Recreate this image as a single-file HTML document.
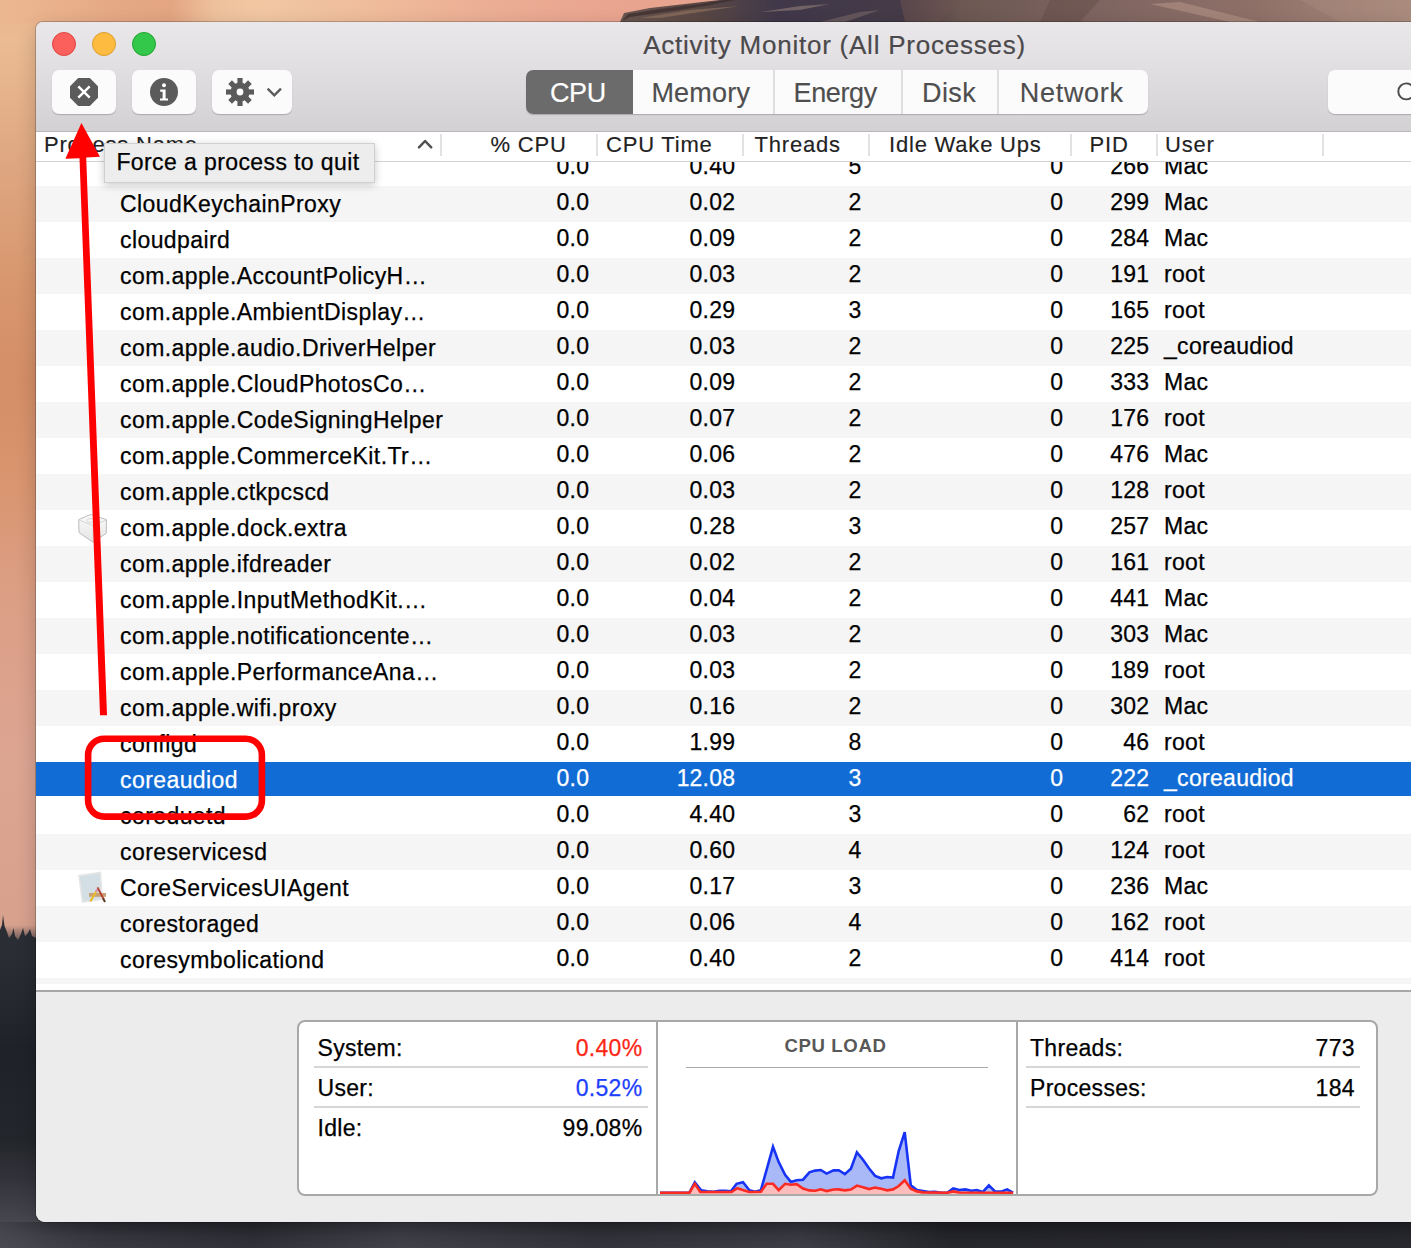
<!DOCTYPE html>
<html><head><meta charset="utf-8"><style>
*{box-sizing:border-box;margin:0;padding:0}
html,body{width:1411px;height:1248px;overflow:hidden}
body{position:relative;font-family:"Liberation Sans",sans-serif;background:#2c2c31}
.a{position:absolute}
.t{white-space:nowrap}
.row{position:absolute;left:0;width:1375px;height:36px;white-space:nowrap;color:#000}
.row.g{background:#f5f5f5}
.row.sel{background:linear-gradient(180deg,#116cd6 0px,#116cd6 34px,#fff 34px);color:#fff}
.row span{position:absolute;top:0;line-height:36px;font-size:23px;letter-spacing:0.3px;-webkit-text-stroke:0.25px currentColor}
.row span.r{text-align:right;width:300px;letter-spacing:0.2px}
.row span.n{letter-spacing:0.42px}
.bl{position:absolute;font-size:23px;line-height:30px;letter-spacing:0.3px;white-space:nowrap;color:#000;-webkit-text-stroke:0.25px currentColor}
.bl.r{text-align:right;width:300px}
</style></head><body>
<div class="a" style="left:0;top:0;width:1411px;height:1248px;background:linear-gradient(180deg,#eab48e 0px,#ebbb93 40px,#dfa983 150px,#d8976f 280px,#d48e68 380px,#d9956f 480px,#dc9f86 600px,#dca592 760px,#d8a18e 925px,#6a5a58 940px,#2a2d33 955px,#1f2228 1050px,#23262b 1140px,#33343b 1180px,#44454c 1215px,#55565d 1248px)"></div>
<div class="a" style="left:0;top:0;width:1411px;height:23px;background:linear-gradient(90deg,#ebb790 0px,#eab48e 36px,#e6a985 110px,#e3a582 170px,#eec19c 215px,#f1c7a2 260px,#efbd9b 360px,#ecb096 470px,#eaa791 560px,#e9a48f 640px,#e9a48f 1411px)"></div>
<svg class="a" style="left:0;top:0" width="1411" height="24" viewBox="0 0 1411 24">
<defs><linearGradient id="rk" gradientUnits="userSpaceOnUse" x1="620" x2="1411" y1="0" y2="0">
<stop offset="0" stop-color="#6a5650"/><stop offset="0.1" stop-color="#5a4844"/><stop offset="0.2" stop-color="#40384a"/><stop offset="0.36" stop-color="#453b48"/>
<stop offset="0.43" stop-color="#6c5852"/><stop offset="0.6" stop-color="#7e6460"/><stop offset="0.8" stop-color="#8e7068"/><stop offset="1" stop-color="#a88a7c"/></linearGradient></defs>
<path d="M620 22 L624 13 L650 8 L685 4 L720 0 L1411 0 L1411 24 L620 24Z" fill="url(#rk)"/>
<path d="M622 21 L628 14 L660 9 L700 4 L725 0 L735 0 L705 6 L665 12 L630 17Z" fill="#3a2c2c" opacity="0.7"/>
<path d="M640 18 L690 10 L740 6 L700 12 L660 18Z" fill="#9a7a66" opacity="0.55"/>
<path d="M760 12 L800 6 L830 4 L800 10Z" fill="#a08a80" opacity="0.5"/>
<path d="M820 22 L860 12 L880 10 L845 22Z" fill="#8c7870" opacity="0.45"/>
<path d="M900 0 L960 0 L940 22 L905 22Z" fill="#6e5450" opacity="0.5"/>
<path d="M1150 4 L1230 22 L1260 22 L1180 2Z" fill="#c2a090" opacity="0.45"/>
<path d="M1050 0 L1100 0 L1080 22 L1040 22Z" fill="#5e4844" opacity="0.4"/>
<path d="M1300 0 L1411 0 L1411 22 L1340 22Z" fill="#b09080" opacity="0.35"/>
</svg>
<div class="a" style="left:0;top:1222px;width:1411px;height:26px;background:linear-gradient(180deg,#25262c 0px,#35363d 14px,#3a3b42 26px)"></div>
<svg class="a" style="left:0;top:900px" width="36" height="60" viewBox="0 900 36 60">
<path d="M0 960 L0 930 L2 925 L3 915 L4.5 926 L7 932 L9 938 L12 934 L13.5 928 L15 936 L18 940 L21 934 L23 928 L25 936 L28 933 L30 929 L32 936 L36 938 L36 960Z" fill="#2a2d33"/>
</svg>
<div class="a" style="left:0;top:1222px;width:1411px;height:26px;background:linear-gradient(90deg,rgba(90,90,98,0.5) 0px,rgba(60,60,68,0.2) 100px,rgba(30,30,36,0.3) 250px,rgba(80,80,88,0.35) 400px,rgba(40,40,46,0.3) 600px,rgba(70,70,78,0.3) 800px,rgba(20,20,24,0.5) 950px,rgba(25,25,30,0.5) 1411px)"></div>
<div class="a" style="left:36px;top:22px;width:1375px;height:1200px;border-radius:7px 0 0 9px;background:#ececec;box-shadow:0 0 0 1px rgba(0,0,0,0.2),0 6px 20px rgba(0,0,0,0.2)"></div>
<div class="a" style="left:36px;top:22px;width:1375px;height:110px;border-radius:7px 0 0 0;background:linear-gradient(180deg,#e9e7e9 0px,#e5e3e5 25px,#d3d1d3 108px);border-bottom:1px solid #b8b6b8"></div>
<div class="a" style="left:52px;top:32px;width:24px;height:24px;border-radius:50%;background:#fc605c;border:1px solid #de4640"></div>
<div class="a" style="left:92px;top:32px;width:24px;height:24px;border-radius:50%;background:#fdbc40;border:1px solid #dc9c2c"></div>
<div class="a" style="left:132px;top:32px;width:24px;height:24px;border-radius:50%;background:#34c84a;border:1px solid #22a230"></div>
<div class="a" style="left:434px;top:15px;width:800px;text-align:center;font-size:26px;line-height:60px;color:#4b494b;letter-spacing:0.76px;white-space:nowrap;padding-left:1px;-webkit-text-stroke:0.2px #4b494b">Activity Monitor (All Processes)</div>
<div class="a" style="left:52px;top:70px;width:64px;height:44px;background:#fbfbfb;border-radius:7px;box-shadow:0 1px 1px rgba(0,0,0,0.2)"></div>
<div class="a" style="left:132px;top:70px;width:64px;height:44px;background:#fbfbfb;border-radius:7px;box-shadow:0 1px 1px rgba(0,0,0,0.2)"></div>
<div class="a" style="left:212px;top:70px;width:80px;height:44px;background:#fbfbfb;border-radius:7px;box-shadow:0 1px 1px rgba(0,0,0,0.2)"></div>
<svg class="a" style="left:0;top:0" width="400" height="130" viewBox="0 0 400 130">
<polygon points="78.2,78 89.8,78 98,86.2 98,97.8 89.8,106 78.2,106 70,97.8 70,86.2" fill="#5b5b5b"/>
<path d="M78.3 86.3 L89.7 97.7 M89.7 86.3 L78.3 97.7" stroke="#fff" stroke-width="2.4"/>
<circle cx="164" cy="92" r="14" fill="#5b5b5b"/>
<circle cx="164" cy="85.3" r="2" fill="#fff"/>
<path d="M160.2 89.6 L165.6 89.6 L165.6 98.4 L168 98.4 L168 100.6 L160 100.6 L160 98.4 L162.6 98.4 L162.6 91.8 L160.2 91.8Z" fill="#fff"/>
<g transform="translate(240,92)" fill="#5b5b5b">
<circle r="9.6"/>
<rect x="-2.6" y="-14" width="5.2" height="28"/>
<rect x="-14" y="-2.6" width="28" height="5.2"/>
<rect x="-2.6" y="-14" width="5.2" height="28" transform="rotate(45)"/>
<rect x="-14" y="-2.6" width="28" height="5.2" transform="rotate(45)"/>
<circle r="3.4" fill="#fff"/>
</g>
<path d="M267.6 88.6 L274.3 95.3 L281 88.6" stroke="#5b5b5b" stroke-width="2.4" fill="none"/>
</svg>
<div class="a" style="left:526px;top:70px;width:622px;height:44px;background:#fbfbfb;border-radius:7px;box-shadow:0 1px 1px rgba(0,0,0,0.2);overflow:hidden"><div class="a" style="left:0;top:0;width:107px;height:44px;background:#6b6b6b"></div></div>
<div class="a" style="left:773px;top:70px;width:2px;height:44px;background:#dedede"></div>
<div class="a" style="left:901px;top:70px;width:2px;height:44px;background:#dedede"></div>
<div class="a" style="left:997px;top:70px;width:2px;height:44px;background:#dedede"></div>
<div class="a" style="left:549.9px;top:63px;font-size:27px;line-height:60px;color:#fff;letter-spacing:-0.3px;white-space:nowrap;-webkit-text-stroke:0.15px #fff">CPU</div>
<div class="a" style="left:651.4px;top:63px;font-size:27px;line-height:60px;color:#4e4e4e;letter-spacing:0.2px;white-space:nowrap;-webkit-text-stroke:0.15px #4e4e4e">Memory</div>
<div class="a" style="left:793.6px;top:63px;font-size:27px;line-height:60px;color:#4e4e4e;letter-spacing:-0.4px;white-space:nowrap;-webkit-text-stroke:0.15px #4e4e4e">Energy</div>
<div class="a" style="left:922px;top:63px;font-size:27px;line-height:60px;color:#4e4e4e;letter-spacing:0.4px;white-space:nowrap;-webkit-text-stroke:0.15px #4e4e4e">Disk</div>
<div class="a" style="left:1019.8px;top:63px;font-size:27px;line-height:60px;color:#4e4e4e;letter-spacing:0.7px;white-space:nowrap;-webkit-text-stroke:0.15px #4e4e4e">Network</div>
<div class="a" style="left:1328px;top:70px;width:120px;height:44px;background:#fbfbfb;border-radius:7px;box-shadow:0 1px 1px rgba(0,0,0,0.2)"></div>
<svg class="a" style="left:1380px;top:70px" width="31" height="44"><circle cx="26.3" cy="21.4" r="8" stroke="#4a4a4a" stroke-width="1.9" fill="none"/></svg>
<div class="a" style="left:36px;top:132px;width:1375px;height:30px;background:#fff;border-bottom:1px solid #d3d3d3"></div>
<div class="a" style="left:44px;top:129.6px;font-size:22px;line-height:30px;color:#222;letter-spacing:0.8px;white-space:nowrap;-webkit-text-stroke:0.15px #222">Process Name</div>
<div class="a" style="left:266.7px;width:300px;text-align:right;top:129.6px;font-size:22px;line-height:30px;color:#222;letter-spacing:0.8px;white-space:nowrap;-webkit-text-stroke:0.15px #222">% CPU</div>
<div class="a" style="left:606px;top:129.6px;font-size:22px;line-height:30px;color:#222;letter-spacing:0.8px;white-space:nowrap;-webkit-text-stroke:0.15px #222">CPU Time</div>
<div class="a" style="left:754.6px;top:129.6px;font-size:22px;line-height:30px;color:#222;letter-spacing:0.8px;white-space:nowrap;-webkit-text-stroke:0.15px #222">Threads</div>
<div class="a" style="left:889px;top:129.6px;font-size:22px;line-height:30px;color:#222;letter-spacing:0.8px;white-space:nowrap;-webkit-text-stroke:0.15px #222">Idle Wake Ups</div>
<div class="a" style="left:1089.6px;top:129.6px;font-size:22px;line-height:30px;color:#222;letter-spacing:0.8px;white-space:nowrap;-webkit-text-stroke:0.15px #222">PID</div>
<div class="a" style="left:1165px;top:129.6px;font-size:22px;line-height:30px;color:#222;letter-spacing:0.8px;white-space:nowrap;-webkit-text-stroke:0.15px #222">User</div>
<div class="a" style="left:440px;top:134px;width:2px;height:22px;background:#e2e2e2"></div>
<div class="a" style="left:596px;top:134px;width:2px;height:22px;background:#e2e2e2"></div>
<div class="a" style="left:742px;top:134px;width:2px;height:22px;background:#e2e2e2"></div>
<div class="a" style="left:868px;top:134px;width:2px;height:22px;background:#e2e2e2"></div>
<div class="a" style="left:1070px;top:134px;width:2px;height:22px;background:#e2e2e2"></div>
<div class="a" style="left:1156px;top:134px;width:2px;height:22px;background:#e2e2e2"></div>
<div class="a" style="left:1322px;top:134px;width:2px;height:22px;background:#e2e2e2"></div>
<svg class="a" style="left:410px;top:135px" width="30" height="20"><path d="M9 12.3 L15.1 6 L21.2 12.3" stroke="#505050" stroke-width="2.5" stroke-linecap="round" stroke-linejoin="round" fill="none"/></svg>
<div class="a" style="left:36px;top:162px;width:1375px;height:828px;overflow:hidden;background:#fff"><div class="row" style="top:-12px"><span class="r" style="left:253.19999999999996px;top:-2px">0.0</span><span class="r" style="left:399.2px;top:-2px">0.40</span><span class="r" style="left:525.4000000000001px;top:-2px">5</span><span class="r" style="left:727.2000000000002px;top:-2px">0</span><span class="r" style="left:813.2000000000002px;top:-2px">266</span><span style="left:1128px;top:-2px">Mac</span></div><div class="row g" style="top:24px"><span class="n" style="left:84px;top:0px">CloudKeychainProxy</span><span class="r" style="left:253.19999999999996px;top:-2px">0.0</span><span class="r" style="left:399.2px;top:-2px">0.02</span><span class="r" style="left:525.4000000000001px;top:-2px">2</span><span class="r" style="left:727.2000000000002px;top:-2px">0</span><span class="r" style="left:813.2000000000002px;top:-2px">299</span><span style="left:1128px;top:-2px">Mac</span></div><div class="row" style="top:60px"><span class="n" style="left:84px;top:0px">cloudpaird</span><span class="r" style="left:253.19999999999996px;top:-2px">0.0</span><span class="r" style="left:399.2px;top:-2px">0.09</span><span class="r" style="left:525.4000000000001px;top:-2px">2</span><span class="r" style="left:727.2000000000002px;top:-2px">0</span><span class="r" style="left:813.2000000000002px;top:-2px">284</span><span style="left:1128px;top:-2px">Mac</span></div><div class="row g" style="top:96px"><span class="n" style="left:84px;top:0px">com.apple.AccountPolicyH…</span><span class="r" style="left:253.19999999999996px;top:-2px">0.0</span><span class="r" style="left:399.2px;top:-2px">0.03</span><span class="r" style="left:525.4000000000001px;top:-2px">2</span><span class="r" style="left:727.2000000000002px;top:-2px">0</span><span class="r" style="left:813.2000000000002px;top:-2px">191</span><span style="left:1128px;top:-2px">root</span></div><div class="row" style="top:132px"><span class="n" style="left:84px;top:0px">com.apple.AmbientDisplay…</span><span class="r" style="left:253.19999999999996px;top:-2px">0.0</span><span class="r" style="left:399.2px;top:-2px">0.29</span><span class="r" style="left:525.4000000000001px;top:-2px">3</span><span class="r" style="left:727.2000000000002px;top:-2px">0</span><span class="r" style="left:813.2000000000002px;top:-2px">165</span><span style="left:1128px;top:-2px">root</span></div><div class="row g" style="top:168px"><span class="n" style="left:84px;top:0px">com.apple.audio.DriverHelper</span><span class="r" style="left:253.19999999999996px;top:-2px">0.0</span><span class="r" style="left:399.2px;top:-2px">0.03</span><span class="r" style="left:525.4000000000001px;top:-2px">2</span><span class="r" style="left:727.2000000000002px;top:-2px">0</span><span class="r" style="left:813.2000000000002px;top:-2px">225</span><span style="left:1128px;top:-2px">_coreaudiod</span></div><div class="row" style="top:204px"><span class="n" style="left:84px;top:0px">com.apple.CloudPhotosCo…</span><span class="r" style="left:253.19999999999996px;top:-2px">0.0</span><span class="r" style="left:399.2px;top:-2px">0.09</span><span class="r" style="left:525.4000000000001px;top:-2px">2</span><span class="r" style="left:727.2000000000002px;top:-2px">0</span><span class="r" style="left:813.2000000000002px;top:-2px">333</span><span style="left:1128px;top:-2px">Mac</span></div><div class="row g" style="top:240px"><span class="n" style="left:84px;top:0px">com.apple.CodeSigningHelper</span><span class="r" style="left:253.19999999999996px;top:-2px">0.0</span><span class="r" style="left:399.2px;top:-2px">0.07</span><span class="r" style="left:525.4000000000001px;top:-2px">2</span><span class="r" style="left:727.2000000000002px;top:-2px">0</span><span class="r" style="left:813.2000000000002px;top:-2px">176</span><span style="left:1128px;top:-2px">root</span></div><div class="row" style="top:276px"><span class="n" style="left:84px;top:0px">com.apple.CommerceKit.Tr…</span><span class="r" style="left:253.19999999999996px;top:-2px">0.0</span><span class="r" style="left:399.2px;top:-2px">0.06</span><span class="r" style="left:525.4000000000001px;top:-2px">2</span><span class="r" style="left:727.2000000000002px;top:-2px">0</span><span class="r" style="left:813.2000000000002px;top:-2px">476</span><span style="left:1128px;top:-2px">Mac</span></div><div class="row g" style="top:312px"><span class="n" style="left:84px;top:0px">com.apple.ctkpcscd</span><span class="r" style="left:253.19999999999996px;top:-2px">0.0</span><span class="r" style="left:399.2px;top:-2px">0.03</span><span class="r" style="left:525.4000000000001px;top:-2px">2</span><span class="r" style="left:727.2000000000002px;top:-2px">0</span><span class="r" style="left:813.2000000000002px;top:-2px">128</span><span style="left:1128px;top:-2px">root</span></div><div class="row" style="top:348px"><span class="n" style="left:84px;top:0px">com.apple.dock.extra</span><span class="r" style="left:253.19999999999996px;top:-2px">0.0</span><span class="r" style="left:399.2px;top:-2px">0.28</span><span class="r" style="left:525.4000000000001px;top:-2px">3</span><span class="r" style="left:727.2000000000002px;top:-2px">0</span><span class="r" style="left:813.2000000000002px;top:-2px">257</span><span style="left:1128px;top:-2px">Mac</span></div><div class="row g" style="top:384px"><span class="n" style="left:84px;top:0px">com.apple.ifdreader</span><span class="r" style="left:253.19999999999996px;top:-2px">0.0</span><span class="r" style="left:399.2px;top:-2px">0.02</span><span class="r" style="left:525.4000000000001px;top:-2px">2</span><span class="r" style="left:727.2000000000002px;top:-2px">0</span><span class="r" style="left:813.2000000000002px;top:-2px">161</span><span style="left:1128px;top:-2px">root</span></div><div class="row" style="top:420px"><span class="n" style="left:84px;top:0px">com.apple.InputMethodKit.…</span><span class="r" style="left:253.19999999999996px;top:-2px">0.0</span><span class="r" style="left:399.2px;top:-2px">0.04</span><span class="r" style="left:525.4000000000001px;top:-2px">2</span><span class="r" style="left:727.2000000000002px;top:-2px">0</span><span class="r" style="left:813.2000000000002px;top:-2px">441</span><span style="left:1128px;top:-2px">Mac</span></div><div class="row g" style="top:456px"><span class="n" style="left:84px;top:0px">com.apple.notificationcente…</span><span class="r" style="left:253.19999999999996px;top:-2px">0.0</span><span class="r" style="left:399.2px;top:-2px">0.03</span><span class="r" style="left:525.4000000000001px;top:-2px">2</span><span class="r" style="left:727.2000000000002px;top:-2px">0</span><span class="r" style="left:813.2000000000002px;top:-2px">303</span><span style="left:1128px;top:-2px">Mac</span></div><div class="row" style="top:492px"><span class="n" style="left:84px;top:0px">com.apple.PerformanceAna…</span><span class="r" style="left:253.19999999999996px;top:-2px">0.0</span><span class="r" style="left:399.2px;top:-2px">0.03</span><span class="r" style="left:525.4000000000001px;top:-2px">2</span><span class="r" style="left:727.2000000000002px;top:-2px">0</span><span class="r" style="left:813.2000000000002px;top:-2px">189</span><span style="left:1128px;top:-2px">root</span></div><div class="row g" style="top:528px"><span class="n" style="left:84px;top:0px">com.apple.wifi.proxy</span><span class="r" style="left:253.19999999999996px;top:-2px">0.0</span><span class="r" style="left:399.2px;top:-2px">0.16</span><span class="r" style="left:525.4000000000001px;top:-2px">2</span><span class="r" style="left:727.2000000000002px;top:-2px">0</span><span class="r" style="left:813.2000000000002px;top:-2px">302</span><span style="left:1128px;top:-2px">Mac</span></div><div class="row" style="top:564px"><span class="n" style="left:84px;top:0px">configd</span><span class="r" style="left:253.19999999999996px;top:-2px">0.0</span><span class="r" style="left:399.2px;top:-2px">1.99</span><span class="r" style="left:525.4000000000001px;top:-2px">8</span><span class="r" style="left:727.2000000000002px;top:-2px">0</span><span class="r" style="left:813.2000000000002px;top:-2px">46</span><span style="left:1128px;top:-2px">root</span></div><div class="row g sel" style="top:600px"><span class="n" style="left:84px;top:0px">coreaudiod</span><span class="r" style="left:253.19999999999996px;top:-2px">0.0</span><span class="r" style="left:399.2px;top:-2px">12.08</span><span class="r" style="left:525.4000000000001px;top:-2px">3</span><span class="r" style="left:727.2000000000002px;top:-2px">0</span><span class="r" style="left:813.2000000000002px;top:-2px">222</span><span style="left:1128px;top:-2px">_coreaudiod</span></div><div class="row" style="top:636px"><span class="n" style="left:84px;top:0px">coreduetd</span><span class="r" style="left:253.19999999999996px;top:-2px">0.0</span><span class="r" style="left:399.2px;top:-2px">4.40</span><span class="r" style="left:525.4000000000001px;top:-2px">3</span><span class="r" style="left:727.2000000000002px;top:-2px">0</span><span class="r" style="left:813.2000000000002px;top:-2px">62</span><span style="left:1128px;top:-2px">root</span></div><div class="row g" style="top:672px"><span class="n" style="left:84px;top:0px">coreservicesd</span><span class="r" style="left:253.19999999999996px;top:-2px">0.0</span><span class="r" style="left:399.2px;top:-2px">0.60</span><span class="r" style="left:525.4000000000001px;top:-2px">4</span><span class="r" style="left:727.2000000000002px;top:-2px">0</span><span class="r" style="left:813.2000000000002px;top:-2px">124</span><span style="left:1128px;top:-2px">root</span></div><div class="row" style="top:708px"><span class="n" style="left:84px;top:0px">CoreServicesUIAgent</span><span class="r" style="left:253.19999999999996px;top:-2px">0.0</span><span class="r" style="left:399.2px;top:-2px">0.17</span><span class="r" style="left:525.4000000000001px;top:-2px">3</span><span class="r" style="left:727.2000000000002px;top:-2px">0</span><span class="r" style="left:813.2000000000002px;top:-2px">236</span><span style="left:1128px;top:-2px">Mac</span></div><div class="row g" style="top:744px"><span class="n" style="left:84px;top:0px">corestoraged</span><span class="r" style="left:253.19999999999996px;top:-2px">0.0</span><span class="r" style="left:399.2px;top:-2px">0.06</span><span class="r" style="left:525.4000000000001px;top:-2px">4</span><span class="r" style="left:727.2000000000002px;top:-2px">0</span><span class="r" style="left:813.2000000000002px;top:-2px">162</span><span style="left:1128px;top:-2px">root</span></div><div class="row" style="top:780px"><span class="n" style="left:84px;top:0px">coresymbolicationd</span><span class="r" style="left:253.19999999999996px;top:-2px">0.0</span><span class="r" style="left:399.2px;top:-2px">0.40</span><span class="r" style="left:525.4000000000001px;top:-2px">2</span><span class="r" style="left:727.2000000000002px;top:-2px">0</span><span class="r" style="left:813.2000000000002px;top:-2px">414</span><span style="left:1128px;top:-2px">root</span></div><div class="row g" style="top:816px;height:6px"></div></div>
<svg class="a" style="left:70px;top:505px" width="45" height="45" viewBox="70 505 45 45">
<defs><linearGradient id="pg" x1="0" x2="0" y1="0" y2="1"><stop offset="0" stop-color="#fbfbfb"/><stop offset="1" stop-color="#e4e4e4"/></linearGradient></defs>
<path d="M78.7 519.6 L90.6 514.5 L106.5 519.6 L106.2 533.4 L92.9 542.2 L79 532.6 Z" fill="url(#pg)" stroke="#bcbcbc" stroke-width="1"/>
<path d="M79 520 L92.9 525.5 L106.3 520" fill="none" stroke="#d0d0d0" stroke-width="0.9"/>
<path d="M92.9 525.5 L92.9 542" stroke="#d6d6d6" stroke-width="0.9"/>
<ellipse cx="91" cy="520.5" rx="4.2" ry="2" fill="#f4f4f4" stroke="#d2d2d2" stroke-width="0.8"/>
</svg>
<svg class="a" style="left:70px;top:865px" width="45" height="45" viewBox="70 865 45 45">
<polygon points="79,875.6 100.4,872.5 102.2,899.2 82.4,902" fill="#d3dee5" stroke="#e6e6e6" stroke-width="1.6"/>
<rect x="89" y="893" width="17" height="3.8" fill="#c8a276"/>
<path d="M90.3 901.5 L96.3 891.2" stroke="#e8bd2c" stroke-width="2.1"/>
<path d="M96 891.6 L97.2 889.6" stroke="#e088b0" stroke-width="2.1"/>
<path d="M97.5 887.4 L103.6 899" stroke="#b8402e" stroke-width="1.9"/>
<path d="M103.2 898.5 L105 902" stroke="#5a3a20" stroke-width="2"/>
</svg>
<div class="a" style="left:103.5px;top:143px;width:271px;height:39.5px;background:#ededed;border:1px solid rgba(0,0,0,0.12);box-shadow:0 2px 8px rgba(0,0,0,0.22)"></div>
<div class="a" style="left:116.4px;top:140px;font-size:23px;line-height:44px;letter-spacing:0.4px;color:#000;white-space:nowrap;-webkit-text-stroke:0.25px #000">Force a process to quit</div>
<div class="a" style="left:36px;top:990px;width:1375px;height:232px;background:#ececec;border-top:2px solid #a6a6a6;border-radius:0 0 0 9px"></div>
<div class="a" style="left:297px;top:1020px;width:1080.5px;height:176px;background:#fff;border:2px solid #a8a8a8;border-radius:8px"></div>
<div class="a" style="left:656px;top:1021px;width:2px;height:174px;background:#a8a8a8"></div>
<div class="a" style="left:1016px;top:1021px;width:2px;height:174px;background:#a8a8a8"></div>
<div class="bl" style="left:317.5px;top:1033px;color:#000">System:</div>
<div class="bl r" style="left:342.4px;top:1033px;color:#fc2616">0.40%</div>
<div class="bl" style="left:317.5px;top:1073px;color:#000">User:</div>
<div class="bl r" style="left:342.4px;top:1073px;color:#1d40fc">0.52%</div>
<div class="bl" style="left:317.5px;top:1113px;color:#000">Idle:</div>
<div class="bl r" style="left:342.4px;top:1113px;color:#000">99.08%</div>
<div class="a" style="left:314px;top:1066px;width:334px;height:2px;background:#d6d6d6"></div>
<div class="a" style="left:314px;top:1106px;width:334px;height:2px;background:#d6d6d6"></div>
<div class="bl" style="left:1030px;top:1033px;color:#000">Threads:</div>
<div class="bl r" style="left:1054.9px;top:1033px;color:#000">773</div>
<div class="bl" style="left:1030px;top:1073px;color:#000">Processes:</div>
<div class="bl r" style="left:1054.9px;top:1073px;color:#000">184</div>
<div class="a" style="left:1026px;top:1066px;width:334px;height:2px;background:#d6d6d6"></div>
<div class="a" style="left:1026px;top:1106px;width:334px;height:2px;background:#d6d6d6"></div>
<div class="a" style="left:735.5px;top:1028.8px;width:200px;text-align:center;font-size:18.6px;line-height:34px;font-weight:bold;color:#585858;letter-spacing:0.6px;white-space:nowrap">CPU LOAD</div>
<div class="a" style="left:686px;top:1066.5px;width:302px;height:1.5px;background:#a8a8a8"></div>
<svg class="a" style="left:0;top:0" width="1411" height="1248" viewBox="0 0 1411 1248">
<polygon points="660.1,1192.7 689.4,1192.5 694.8,1182.3 701.2,1190.2 707.3,1191.4 713.7,1191.7 719.4,1190.8 725.2,1190.9 730.9,1191.4 736.6,1183.8 743.0,1182.3 749.4,1190.2 755.1,1191.7 760.9,1190.2 773.0,1146.8 778.7,1162.1 785.1,1174.9 790.9,1181.9 796.6,1180.2 803.0,1179.7 809.4,1172.3 815.1,1170.6 820.8,1170.0 826.6,1173.6 833.6,1170.4 838.8,1170.2 844.8,1174.1 850.9,1168.7 856.9,1152.3 863.0,1159.7 869.1,1168.5 875.1,1175.9 881.2,1178.3 887.2,1177.0 893.0,1177.6 898.7,1151.0 904.7,1132.1 910.8,1185.3 916.9,1190.0 922.9,1191.0 929.0,1192.0 935.0,1191.8 941.1,1192.7 947.2,1192.7 953.2,1188.4 959.3,1190.0 965.3,1189.4 971.4,1190.7 976.8,1190.0 982.8,1192.0 988.9,1185.3 995.0,1191.4 1001.0,1191.6 1007.1,1189.4 1013.1,1192.7 1013.1,1194.0 660.1,1194.0" fill="#a9b8f7"/>
<polygon points="660.0,1192.7 689.4,1192.7 694.8,1183.8 700.3,1192.0 731.5,1192.0 737.3,1188.2 744.3,1190.4 749.4,1192.0 760.9,1191.8 766.6,1183.8 773.0,1183.8 778.7,1190.2 785.1,1183.8 790.9,1184.8 796.6,1184.2 803.0,1188.5 809.4,1190.4 815.1,1190.8 820.8,1189.3 826.6,1191.1 833.6,1189.5 838.8,1189.4 844.8,1190.4 850.9,1189.6 856.9,1185.6 863.0,1187.3 869.1,1189.1 875.1,1187.6 881.2,1188.7 887.2,1190.3 893.0,1189.4 898.7,1186.0 904.7,1180.3 910.8,1188.7 916.9,1191.4 922.9,1192.4 947.2,1192.7 953.2,1191.4 959.3,1192.5 1013.1,1192.7 1013.1,1194.0 660.0,1194.0" fill="#fcbcbc"/>
<polyline points="660.1,1192.7 689.4,1192.5 694.8,1182.3 701.2,1190.2 707.3,1191.4 713.7,1191.7 719.4,1190.8 725.2,1190.9 730.9,1191.4 736.6,1183.8 743.0,1182.3 749.4,1190.2 755.1,1191.7 760.9,1190.2 773.0,1146.8 778.7,1162.1 785.1,1174.9 790.9,1181.9 796.6,1180.2 803.0,1179.7 809.4,1172.3 815.1,1170.6 820.8,1170.0 826.6,1173.6 833.6,1170.4 838.8,1170.2 844.8,1174.1 850.9,1168.7 856.9,1152.3 863.0,1159.7 869.1,1168.5 875.1,1175.9 881.2,1178.3 887.2,1177.0 893.0,1177.6 898.7,1151.0 904.7,1132.1 910.8,1185.3 916.9,1190.0 922.9,1191.0 929.0,1192.0 935.0,1191.8 941.1,1192.7 947.2,1192.7 953.2,1188.4 959.3,1190.0 965.3,1189.4 971.4,1190.7 976.8,1190.0 982.8,1192.0 988.9,1185.3 995.0,1191.4 1001.0,1191.6 1007.1,1189.4 1013.1,1192.7" fill="none" stroke="#1733f5" stroke-width="2.6"/>
<polyline points="660.0,1192.7 689.4,1192.7 694.8,1183.8 700.3,1192.0 731.5,1192.0 737.3,1188.2 744.3,1190.4 749.4,1192.0 760.9,1191.8 766.6,1183.8 773.0,1183.8 778.7,1190.2 785.1,1183.8 790.9,1184.8 796.6,1184.2 803.0,1188.5 809.4,1190.4 815.1,1190.8 820.8,1189.3 826.6,1191.1 833.6,1189.5 838.8,1189.4 844.8,1190.4 850.9,1189.6 856.9,1185.6 863.0,1187.3 869.1,1189.1 875.1,1187.6 881.2,1188.7 887.2,1190.3 893.0,1189.4 898.7,1186.0 904.7,1180.3 910.8,1188.7 916.9,1191.4 922.9,1192.4 947.2,1192.7 953.2,1191.4 959.3,1192.5 1013.1,1192.7" fill="none" stroke="#fb2a22" stroke-width="2.6"/>
<polygon points="81.4,123 100,156.8 86.2,157.6 107,715.3 100,715.3 79.5,158.3 65.4,158.7" fill="#ff0000"/>
<rect x="88.1" y="738.8" width="173.8" height="77.8" rx="16" ry="16" fill="none" stroke="#ff0000" stroke-width="6.6"/>
</svg>
</body></html>
